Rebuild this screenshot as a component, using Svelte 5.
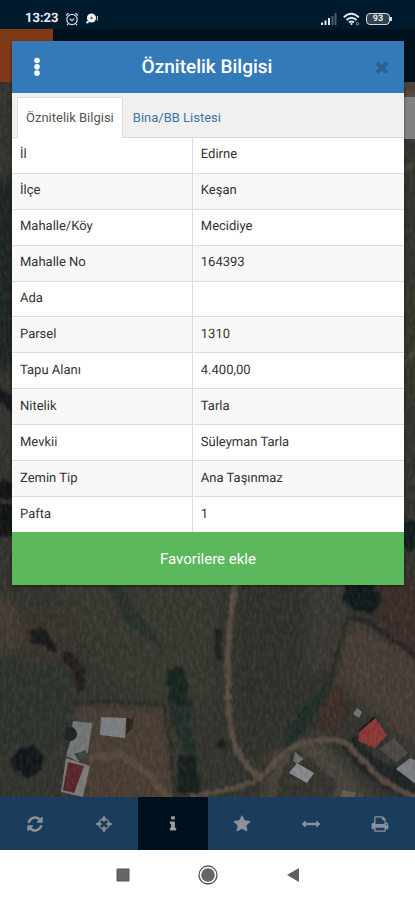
<script>
  const rows = [
    ['İl', 'Edirne'],
    ['İlçe', 'Keşan'],
    ['Mahalle/Köy', 'Mecidiye'],
    ['Mahalle No', '164393'],
    ['Ada', ''],
    ['Parsel', '1310'],
    ['Tapu Alanı', '4.400,00'],
    ['Nitelik', 'Tarla'],
    ['Mevkii', 'Süleyman Tarla'],
    ['Zemin Tip', 'Ana Taşınmaz'],
    ['Pafta', '1']
  ];

  const tools = [
    { name: 'Yenile', path: 'M1639 1056q0 5-1 7-64 268-268 434.5t-478 166.5q-146 0-282.5-55t-243.5-157l-129 129q-19 19-45 19t-45-19-19-45v-448q0-26 19-45t45-19h448q26 0 45 19t19 45-19 45l-137 137q71 66 161 102t187 36q134 0 250-65t186-179q11-17 53-117 8-23 30-23h192q13 0 22.5 9.5t9.5 22.5zm25-800v448q0 26-19 45t-45 19h-448q-26 0-45-19t-19-45 19-45l138-138q-148-137-349-137-134 0-250 65t-186 179q-11 17-53 117-8 23-30 23h-199q-13 0-22.5-9.5t-9.5-22.5v-7q65-268 270-434.5t480-166.5q146 0 284 55.5t245 156.5l130-129q19-19 45-19t45 19 19 45z' },
    { name: 'Konum', path: 'M1325 1024h-109q-26 0-45-19t-19-45v-128q0-26 19-45t45-19h109q-32-108-112.5-188.5t-188.5-112.5v109q0 26-19 45t-45 19h-128q-26 0-45-19t-19-45v-109q-108 32-188.5 112.5t-112.5 188.5h109q26 0 45 19t19 45v128q0 26-19 45t-45 19h-109q32 108 112.5 188.5t188.5 112.5v-109q0-26 19-45t45-19h128q26 0 45 19t19 45v109q108-32 188.5-112.5t112.5-188.5zm339-192v128q0 26-19 45t-45 19h-143q-37 161-154.5 278.5t-278.5 154.5v143q0 26-19 45t-45 19h-128q-26 0-45-19t-19-45v-143q-161-37-278.5-154.5t-154.5-278.5h-143q-26 0-45-19t-19-45v-128q0-26 19-45t45-19h143q37-161 154.5-278.5t278.5-154.5v-143q0-26 19-45t45-19h128q26 0 45 19t19 45v143q161 37 278.5 154.5t154.5 278.5h143q26 0 45 19t19 45z' },
    { name: 'Bilgi', active: true, path: 'M1216 1344v128q0 26-19 45t-45 19h-512q-26 0-45-19t-19-45v-128q0-26 19-45t45-19h64v-384h-64q-26 0-45-19t-19-45v-128q0-26 19-45t45-19h384q26 0 45 19t19 45v576h64q26 0 45 19t19 45zm-128-1152v192q0 26-19 45t-45 19h-256q-26 0-45-19t-19-45v-192q0-26 19-45t45-19h256q26 0 45 19t19 45z' },
    { name: 'Favoriler', path: 'M1728 647q0 22-26 48l-363 354 86 500q1 7 1 20 0 21-10.5 35.5t-30.5 14.5q-19 0-40-12l-449-236-449 236q-22 12-40 12-21 0-31.5-14.5t-10.5-35.5q0-6 2-20l86-500-364-354q-25-27-25-48 0-37 56-46l502-73 225-455q19-41 49-41t49 41l225 455 502 73q56 9 56 46z' },
    { name: 'Ölçüm', path: 'M1792 896q0 26-19 45l-256 256q-19 19-45 19t-45-19-19-45v-128h-1024v128q0 26-19 45t-45 19-45-19l-256-256q-19-19-19-45t19-45l256-256q19-19 45-19t45 19 19 45v128h1024v-128q0-26 19-45t45-19 45 19l256 256q19 19 19 45z' },
    { name: 'Yazdır', path: 'M448 1536h896v-256h-896v256zm0-640h896v-384h-160q-40 0-68-28t-28-68v-160h-640v640zm1152 64q0-26-19-45t-45-19-45 19-19 45 19 45 45 19 45-19 19-45zm128 0v416q0 13-9.5 22.5t-22.5 9.5h-224v160q0 40-28 68t-68 28h-960q-40 0-68-28t-28-68v-160h-224q-13 0-22.5-9.5t-9.5-22.5v-416q0-79 56.5-135.5t135.5-56.5h64v-544q0-40 28-68t68-28h672q40 0 88 20t76 48l152 152q28 28 48 76t20 88v256h64q79 0 135.5 56.5t56.5 135.5z' }
  ];

  let tab = $state(0);
</script>

<div class="screen">
  <header class="status">
    <div class="left">
      <span class="clock">13:23</span>
      <svg width="14" height="14" viewBox="0 0 14 14" fill="none" stroke="#d5dde3" stroke-width="1.2" aria-hidden="true">
        <circle cx="7" cy="7.5" r="5.2" /><path d="M4.7 6.8 7 8.6l2.2-2M1 3.5 3.5 1.2M13 3.5l-2.5-2.3M3 12l-1 1.2M11 12l1 1.2" />
      </svg>
      <svg width="14" height="14" viewBox="0 0 14 14" aria-hidden="true">
        <circle cx="6.5" cy="6" r="4.6" fill="#eef2f4" /><circle cx="2.4" cy="10.2" r="1.2" fill="#eef2f4" /><circle cx="6.5" cy="6" r="1.2" fill="#52636e" /><path d="M12.4 4v4.5" stroke="#c5ced4" />
      </svg>
    </div>
    <div class="right">
      <svg width="16" height="12" viewBox="0 0 16 12" aria-hidden="true">
        <path d="M0 9.5h2V12H0zM3.5 7.5h2V12h-2zM7 5h2v7H7z" fill="#e4eaee" /><path d="M10.5 3h2v9h-2zM13.5 0h2v12h-2z" fill="#4b5b67" />
      </svg>
      <svg width="17" height="14" viewBox="0 0 17 14" fill="none" stroke="#e4eaee" stroke-width="1.9" aria-hidden="true">
        <path d="M.8 5.2q7.2-7 15 0M3.5 8q5-4.6 10 0M6 10.4q2.5-2 5 0" /><circle cx="8.5" cy="12" r="1" fill="#e4eaee" stroke="none" /><circle cx="14.5" cy="11.8" r="1.2" stroke="#8a98a2" stroke-width="1" />
      </svg>
      <span class="battery">93</span>
    </div>
  </header>

  <div class="appbar"><div class="brand"></div></div>

  <main class="map">
    <svg class="ground" viewBox="0 82 415 715" preserveAspectRatio="xMidYMax slice" aria-hidden="true">
      <defs>
        <filter id="soft" x="-20%" y="-20%" width="140%" height="140%" color-interpolation-filters="sRGB"><feGaussianBlur stdDeviation="6" /></filter>
        <filter id="edge" x="-10%" y="-10%" width="120%" height="120%" color-interpolation-filters="sRGB">
          <feTurbulence type="fractalNoise" baseFrequency=".16" numOctaves="3" seed="8" result="n" />
          <feDisplacementMap in="SourceGraphic" in2="n" scale="6" xChannelSelector="R" yChannelSelector="G" /><feGaussianBlur stdDeviation=".8" />
        </filter>
        <filter id="roof" color-interpolation-filters="sRGB"><feGaussianBlur stdDeviation=".5" /></filter>
        <filter id="grain" x="0" y="0" width="100%" height="100%" color-interpolation-filters="sRGB">
          <feTurbulence type="fractalNoise" baseFrequency=".3 .14" numOctaves="4" seed="3" />
          <feColorMatrix values="1.4 0 0 0 -.48  1.4 0 0 0 -.48  1.4 0 0 0 -.49  0 0 0 0 .08" />
        </filter>
      </defs>
      <rect y="82" width="415" height="715" fill="#34352f" />
      <g filter="url(#soft)">
        <path d="M-10 180h30v190h-30z" fill="#1f2722" />
        <path d="M50 575h170l-10 140-90-20-50-70z" fill="#383931" />
        <path d="M-10 590 15 605 28 640 0 655z" fill="#483e35" />
        <path d="M20 610 75 610 75 665 25 660z" fill="#3c352f" />
        <path d="M-10 660 65 670 70 740-10 750z" fill="#2e342e" />
        <path d="M240 575h70l30 70-20 60-45 62-35-20z" fill="#30322b" />
        <path d="M310 575h35l-2 65-14 30-25 8z" fill="#3b3934" />
        <path d="M382 575h43v85l-50-35z" fill="#3d2e29" />
        <path d="m343 625 30 3 52 38v90l-90-75z" fill="#483f38" />
        <path d="m75 705 90 3 15 100H85z" fill="#4c4036" />
        <path d="m267 755 50-20 60 70H265z" fill="#4c463e" />
        <path d="M398 80h30v55h-30z" fill="#57463a" />
        <path d="M395 290h30v110h-30z" fill="#33392b" />
      </g>
      <g filter="url(#edge)">
        <path d="m107 584 16 3 24 38 18 21-5 2-34-26z" fill="#29332c" />
        <path d="m166 668 16 4 12 34-4 16 8 40-10-2-18-44z" fill="#223028" />
        <path d="m168 670 13-4 7 16-4 22-15-3z" fill="#16261e" />
        <path d="m62 651 13 5 9 13 1 20-8 3-5-22-9-9z" fill="#211e1d" />
        <path d="m31 629 15-1 5 14-7 5-13-5z" fill="#171a19" /><circle cx="52" cy="647" r="5" fill="#1c1918" />
        <path d="m10 761 10-13 14-2 9 10-2 14-11 7-8-1-10-9z" fill="#11171b" />
        <path d="m72 704 26-3 65 4 3 12 5 30 5 50" fill="none" stroke="#2a2c26" stroke-width="3" />
        <path d="m178 754 16 3 8 36h-24z" fill="#17211e" />
        <path d="m342 600 5-18h25l10 17-10 15-17-4z" fill="#10191c" />
        <path d="m345 618 20 2 60 42" fill="none" stroke="#282422" stroke-width="5" />
        <path d="m336 676-20 18-28 32-4 24 18-14 22-34z" fill="#212f29" />
        <path d="m346 622-10 40-6 16" fill="none" stroke="#2b2922" stroke-width="4" />
        <path d="m327 689 15-3 10 22-15 24-20-5z" fill="#3e3028" />
        <path d="m337 742 20-6 20 24 33 12 10 30-28-9-32-23z" fill="#1f2524" />
        <path d="m295 748 43 34-10 24h-56l10-34z" fill="#373530" />
        <path d="M218 630v30" stroke="#201c1a" stroke-width="6" />
        <circle cx="222" cy="744" r="5" fill="#1f1b16" /><circle cx="268" cy="769" r="5" fill="#1e1c18" />
        <path d="m-5 384 35 25v15L-5 400z" fill="#151a1a" />
        <circle cx="6" cy="490" r="10" fill="#121515" /><circle cx="4" cy="520" r="17" fill="#111615" />
        <circle cx="411" cy="535" r="15" fill="#10201c" />
      </g>
      <g fill="none" filter="url(#edge)">
        <path d="M237 575Q226 635 228 682C227 739 236 758 260 778L290 748Q320 735 345 742L382 780 424 803" stroke="#5c5044" stroke-width="6" />
        <path d="M260 779Q238 789 190 797" stroke="#5c5044" stroke-width="5" />
        <path d="m89 758 30-4 28 18 22 27" stroke="#5b4b3d" stroke-width="8" />
        <path d="m272 800 3-16" stroke="#4c4138" stroke-width="9" />
        <path d="m398 172 20-10M396 375l24-30" stroke="#48443a" stroke-width="4" />
        <path d="m355 665 14 12" stroke="#5a4e43" stroke-width="2" />
      </g>
      <g filter="url(#roof)">
        <path d="m101 717 25 1-1 20-25-3z" fill="#828488" /><path d="m127 718 7 1-1 9-7 7z" fill="#30261f" />
        <path d="m73 721 19 2-4 30-7-1-2 10-13-6 4-14 7-8-5-8z" fill="#777b7b" />
        <path d="m66 758 24 8-7 31-22-5z" fill="#827e7b" /><path d="m68 762 16 4-10 27-11-3z" fill="#5b2630" />
        <circle cx="70" cy="734" r="7" fill="#202521" />
        <path d="m74 754 12-4 2 8-10 2z" fill="#3c4742" />
        <path d="m360 730 15-12 12 17-12 13-17-7z" fill="#913b38" /><path d="m359 731 16-14" stroke="#1a1817" stroke-width="2" /><path d="m357 708 5 4-3 6-6-4z" fill="#7b7978" />
        <path d="m379 749 15-11 14 15-12 10z" fill="#514b46" />
        <path d="m396 769 14-11 7 3v24z" fill="#808385" />
        <path d="m297 763 17 10-7 10-18-10z" fill="#8b9092" /><path d="m295 752 9 7-7 5-4-3z" fill="#6c7173" />
        <path d="m343 790 13 3-3 6h-14z" fill="#69625b" />
      </g>
      <rect y="82" width="415" height="715" filter="url(#grain)" />
      <rect x="390" y="97" width="25" height="42" fill="#818181" />
    </svg>
  </main>

  <nav class="toolbar" aria-label="Harita araçları">
    {#each tools as tool}
      <button class:active={tool.active} aria-label={tool.name}>
        <svg width="18" height="18" viewBox="0 0 1792 1792" fill="currentColor" aria-hidden="true"><path d={tool.path} /></svg>
      </button>
    {/each}
  </nav>

  <footer class="system">
    <button aria-label="Son uygulamalar"><svg width="20" height="20" viewBox="0 0 20 20"><path d="M4 4h12v12H4z" fill="#666" stroke="#555" /></svg></button>
    <button aria-label="Ana ekran"><svg width="20" height="20" viewBox="0 0 20 20"><circle cx="10" cy="10" r="9" fill="none" stroke="#555" stroke-width="1.3" /><circle cx="10" cy="10" r="6.8" fill="#666" /></svg></button>
    <button aria-label="Geri"><svg width="20" height="20" viewBox="0 0 20 20"><path d="M4 10 16 3v14z" fill="#606060" /></svg></button>
  </footer>

  <div class="dialog" role="dialog" aria-labelledby="title">
    <div class="head">
      <button aria-label="Menü"><svg width="8" height="20" viewBox="0 0 8 20" fill="#fff"><circle cx="4" cy="3.5" r="2.8" /><circle cx="4" cy="9.8" r="2.8" /><circle cx="4" cy="16.1" r="2.8" /></svg></button>
      <h1 id="title">Öznitelik Bilgisi</h1>
      <button aria-label="Kapat"><svg width="18" height="18" viewBox="0 0 1792 1792" fill="#2a6093"><path d="M1490 1322q0 40-28 68l-136 136q-28 28-68 28t-68-28l-294-294-294 294q-28 28-68 28t-68-28l-136-136q-28-28-28-68t28-68l294-294-294-294q-28-28-28-68t28-68l136-136q28-28 68-28t68 28l294 294 294-294q28-28 68-28t68 28l136 136q28 28 28 68t-28 68l-294 294 294 294q28 28 28 68z" /></svg></button>
    </div>
    <div class="tabs" role="tablist">
      <button role="tab" aria-selected={tab === 0} onclick={() => (tab = 0)}>Öznitelik Bilgisi</button>
      <button role="tab" aria-selected={tab === 1} onclick={() => (tab = 1)}>Bina/BB Listesi</button>
    </div>
    <table>
      <tbody>
        {#each rows as [label, value]}
          <tr><th scope="row">{label}</th><td>{value}</td></tr>
        {/each}
      </tbody>
    </table>
    <button class="favorite">Favorilere ekle</button>
  </div>
</div>

<style>
  :global(body) { margin: 0; }
  .screen {
    position: relative;
    display: flex;
    flex-direction: column;
    min-height: 100vh;
    background: #fff;
    font-family: Roboto, "Noto Sans", sans-serif;
    font-size: 13px;
    text-rendering: geometricPrecision;
    color: #333;
  }
  button {
    margin: 0;
    padding: 0;
    border: 0;
    background: none;
    color: inherit;
    font: inherit;
    cursor: pointer;
  }
  svg { display: block; }

  .status {
    display: flex;
    justify-content: space-between;
    align-items: center;
    box-sizing: border-box;
    height: 29px;
    padding: 8px 25px 0;
    background: #001a2d;
    color: #e8eef2;
  }
  .left, .right { display: flex; align-items: center; gap: 6px; }
  .clock { font-size: 13px; font-weight: 700; line-height: 20px; }
  .battery {
    position: relative;
    box-sizing: border-box;
    width: 24px;
    border: 1px solid #d6dde2;
    border-radius: 4px;
    background: #34434f;
    font-size: 9px;
    font-weight: 700;
    line-height: 10px;
    text-align: center;
  }
  .battery::after {
    content: "";
    position: absolute;
    top: 3px;
    right: -3px;
    width: 2px;
    height: 4px;
    background: #d6dde2;
  }

  .appbar { display: flex; height: 53px; background: #00101c; }
  .brand { width: 53px; background: #803a17; }

  .map { position: relative; flex: 1; overflow: hidden; background: #34352f; }
  .ground { position: absolute; inset: 0; width: 100%; height: 100%; }

  .toolbar { display: flex; height: 53px; background: #1a3d5d; color: #8b9298; }
  .toolbar button { flex: 1; display: grid; place-items: center; }
  .toolbar .active { background: #00101d; color: #9a9da0; }

  .system {
    display: flex;
    justify-content: center;
    align-items: center;
    gap: 65px;
    height: 50px;
    background: #fff;
  }
  .system button { display: grid; place-items: center; }

  .dialog {
    position: absolute;
    top: 41px;
    left: 12px;
    right: 11px;
    background: #fff;
    box-shadow: 0 1px 3px rgba(0, 0, 0, .5);
  }
  .head {
    display: flex;
    justify-content: space-between;
    align-items: center;
    height: 52px;
    padding: 0 13px 0 21px;
    background: #357ab8;
  }
  h1 { margin: 0; color: #fff; font-size: 19px; font-weight: 500; line-height: 24px; }
  .tabs {
    display: flex;
    box-sizing: border-box;
    height: 45px;
    padding: 4px 5px 0;
    border-bottom: 1px solid #d8d8d8;
    background: #f0f0f0;
  }
  .tabs button {
    box-sizing: border-box;
    padding: 0 8px;
    border: 1px solid transparent;
    border-bottom: 0;
    color: #3c76a8;
    line-height: 20px;
  }
  .tabs [aria-selected="true"] {
    margin-right: 1px;
    margin-bottom: -1px;
    border-color: #ddd;
    background: #fff;
    color: #555;
  }
  table { width: 100%; height: 394px; border-collapse: collapse; table-layout: fixed; }
  th, td {
    padding: 0 8px;
    border-bottom: 1px solid #ddd;
    font-weight: 400;
    line-height: 20px;
    text-align: left;
  }
  th { width: 46%; box-sizing: border-box; border-right: 1px solid #ddd; }
  tr:nth-child(even) { background: #f8f8f8; }
  tr:last-child > * { border-bottom: 0; }
  .favorite {
    display: block;
    width: 100%;
    height: 53px;
    background: #5cb85c;
    color: #fff;
    font-size: 15px;
  }
</style>
